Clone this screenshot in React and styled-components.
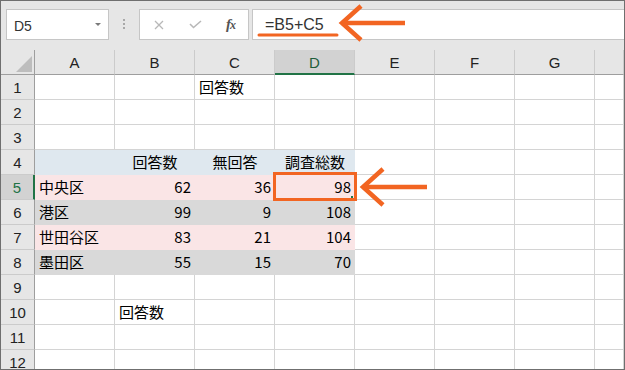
import React from "react";
import styled, { createGlobalStyle } from "styled-components";

const ORANGE = "#f26522";
const GREEN = "#217346";

const fills = {
  blue: "#dfe8ef",
  pink: "#fae5e6",
  gray: "#d9d9d9",
};

const GlobalStyle = createGlobalStyle`
  html, body {
    margin: 0;
    padding: 0;
    background: #fff;
  }
  body {
    font-family: "Liberation Sans", Arial, sans-serif;
  }
`;

const Frame = styled.div`
  position: relative;
  width: 625px;
  height: 370px;
  box-sizing: border-box;
  border: 1px solid #6f6f6f;
  background: #e6e6e6;
  overflow: hidden;
`;

const FormulaBar = styled.div`
  height: 49px;
  box-sizing: border-box;
  padding: 8px 0 0 5px;
  display: flex;
  align-items: flex-start;
`;

const NameBox = styled.div`
  width: 103px;
  height: 31px;
  box-sizing: border-box;
  border: 1px solid #c6c6c6;
  background: #fff;
  display: flex;
  align-items: center;
  justify-content: space-between;
  padding: 3px 7px 0 7px;
  font-size: 14px;
  color: #333;
`;

const Caret = styled.span`
  width: 0;
  height: 0;
  margin-top: -3px;
  border-left: 3px solid transparent;
  border-right: 3px solid transparent;
  border-top: 3px solid #7a7a7a;
`;

const Dots = styled.div`
  margin-left: 14px;
  padding-top: 10px;
  display: flex;
  flex-direction: column;
  gap: 2px;
  span {
    width: 2px;
    height: 2px;
    background: #a8a8a8;
  }
`;

const FuncButtons = styled.div`
  margin-left: 14px;
  width: 110px;
  height: 31px;
  box-sizing: border-box;
  border: 1px solid #c6c6c6;
  background: #fff;
  display: grid;
  grid-template-columns: 37px 37px 33px;
  align-items: center;
  justify-items: center;
`;

const Fx = styled.span`
  font-family: "Liberation Serif", "Times New Roman", serif;
  font-style: italic;
  font-weight: bold;
  font-size: 15px;
  color: #555;
  letter-spacing: -1px;
  span {
    font-size: 12px;
  }
`;

const FormulaInput = styled.div`
  flex: 1;
  margin-left: 3px;
  height: 31px;
  box-sizing: border-box;
  border: 1px solid #c6c6c6;
  border-right: none;
  background: #fff;
  display: flex;
  align-items: center;
  padding-left: 12px;
  font-size: 16px;
  color: #333;
`;

const Sheet = styled.div`
  display: grid;
  grid-template-columns: 34px repeat(7, 80px) 1fr;
  grid-auto-rows: 25px;
  background: #fff;
`;

const ColHead = styled.div`
  position: relative;
  box-sizing: border-box;
  background: ${(p) => (p.$active ? "#d2d2d2" : "#e6e6e6")};
  border-right: 1px solid #cbcbcb;
  border-bottom: ${(p) => (p.$active ? `2px solid ${GREEN}` : "1px solid #9e9e9e")};
  display: flex;
  align-items: center;
  justify-content: center;
  padding-top: ${(p) => (p.$active ? "1px" : "0")};
  font-size: 15px;
  color: ${(p) => (p.$active ? "#1d5e3b" : "#222")};
`;

const Corner = styled(ColHead)`
  border-right: 1px solid #9e9e9e;
  &::after {
    content: "";
    position: absolute;
    right: 2px;
    bottom: 2px;
    border-left: 16px solid transparent;
    border-bottom: 16px solid #bdbdbd;
  }
`;

const RowHead = styled.div`
  box-sizing: border-box;
  background: ${(p) => (p.$active ? "#d2d2d2" : "#e6e6e6")};
  border-right: ${(p) => (p.$active ? `2px solid ${GREEN}` : "1px solid #9e9e9e")};
  border-bottom: 1px solid #cbcbcb;
  display: flex;
  align-items: center;
  justify-content: center;
  font-size: 15px;
  color: ${(p) => (p.$active ? GREEN : "#222")};
`;

const Cell = styled.div`
  position: relative;
  z-index: ${(p) => (p.$marked ? 2 : "auto")};
  box-sizing: border-box;
  background: ${(p) => fills[p.$fill] || "#fff"};
  border-right: 1px solid ${(p) => fills[p.$fill] || "#d4d4d4"};
  border-bottom: 1px solid ${(p) => fills[p.$fill] || "#d4d4d4"};
  display: flex;
  align-items: center;
  justify-content: ${(p) =>
    p.$align === "right" ? "flex-end" : p.$align === "center" ? "center" : "flex-start"};
  padding: 0 3px 2px 4px;
  font-family: "Noto Sans CJK JP", sans-serif;
  font-size: 15px;
  color: #000;
  white-space: nowrap;

  ${(p) =>
    p.$marked &&
    `
    &::after {
      content: "";
      position: absolute;
      top: -3px;
      left: -2px;
      right: -3px;
      bottom: -2px;
      border: 3px solid ${ORANGE};
    }
    &::before {
      content: "";
      position: absolute;
      right: 1px;
      bottom: 1px;
      width: 2px;
      height: 2px;
      background: ${GREEN};
      z-index: 1;
    }
  `}
`;

const Overlay = styled.svg`
  position: absolute;
  left: -1px;
  top: -1px;
  pointer-events: none;
`;

const COLS = ["A", "B", "C", "D", "E", "F", "G", ""];

// each row: fill for A-D, and the cell values with their alignment
const rows = [
  { n: 1, cells: { C: ["回答数", "left"] } },
  { n: 2 },
  { n: 3 },
  {
    n: 4,
    fill: "blue",
    cells: { B: ["回答数", "center"], C: ["無回答", "center"], D: ["調査総数", "center"] },
  },
  { n: 5, fill: "pink", data: ["中央区", 62, 36, 98] },
  { n: 6, fill: "gray", data: ["港区", 99, 9, 108] },
  { n: 7, fill: "pink", data: ["世田谷区", 83, 21, 104] },
  { n: 8, fill: "gray", data: ["墨田区", 55, 15, 70] },
  { n: 9 },
  { n: 10, cells: { B: ["回答数", "left"] } },
  { n: 11 },
  { n: 12 },
];

const cellsOf = (row) => {
  if (row.data) {
    const [label, ...nums] = row.data;
    return {
      A: [label, "left"],
      B: [nums[0], "right"],
      C: [nums[1], "right"],
      D: [nums[2], "right"],
    };
  }
  return row.cells || {};
};

const Cross = () => (
  <svg width="10" height="10" viewBox="0 0 10 10">
    <path d="M1 1 L9 9 M9 1 L1 9" stroke="#b8b8b8" strokeWidth="1.3" fill="none" />
  </svg>
);

const Check = () => (
  <svg width="13" height="9" viewBox="0 0 13 9">
    <path d="M1 4 L4.5 7.5 L12 1" stroke="#b8b8b8" strokeWidth="1.6" fill="none" />
  </svg>
);

const App = () => {
  return (
    <>
      <GlobalStyle />
      <Frame>
        <FormulaBar>
          <NameBox>
            D5
            <Caret />
          </NameBox>
          <Dots>
            <span />
            <span />
            <span />
          </Dots>
          <FuncButtons>
            <Cross />
            <Check />
            <Fx>
              f<span>x</span>
            </Fx>
          </FuncButtons>
          <FormulaInput>=B5+C5</FormulaInput>
        </FormulaBar>

        <Sheet>
          <Corner />
          {COLS.map((c, i) => (
            <ColHead key={i} $active={c === "D"}>
              {c}
            </ColHead>
          ))}
          {rows.map((row) => {
            const cells = cellsOf(row);
            return (
              <React.Fragment key={row.n}>
                <RowHead $active={row.n === 5}>{row.n}</RowHead>
                {COLS.map((c, i) => {
                  const filled = row.fill && i < 4 ? row.fill : null;
                  const value = cells[c];
                  return (
                    <Cell
                      key={i}
                      $fill={filled}
                      $align={value ? value[1] : "left"}
                      $marked={row.n === 5 && c === "D"}
                    >
                      {value ? value[0] : ""}
                    </Cell>
                  );
                })}
              </React.Fragment>
            );
          })}
        </Sheet>

        <Overlay width="625" height="370" viewBox="0 0 625 370">
          <g stroke={ORANGE} fill="none">
            <line x1="259" y1="35" x2="337" y2="35" strokeWidth="3" strokeLinecap="round" />
            <polyline points="361,6 342,23 361,40" strokeWidth="4.5" />
            <line x1="342" y1="23" x2="405" y2="23" strokeWidth="4.5" />
            <polyline points="383,169 363,187 383,205" strokeWidth="4.5" />
            <line x1="363" y1="187" x2="427" y2="187" strokeWidth="4.5" />
          </g>
        </Overlay>
      </Frame>
    </>
  );
};

export default App;
